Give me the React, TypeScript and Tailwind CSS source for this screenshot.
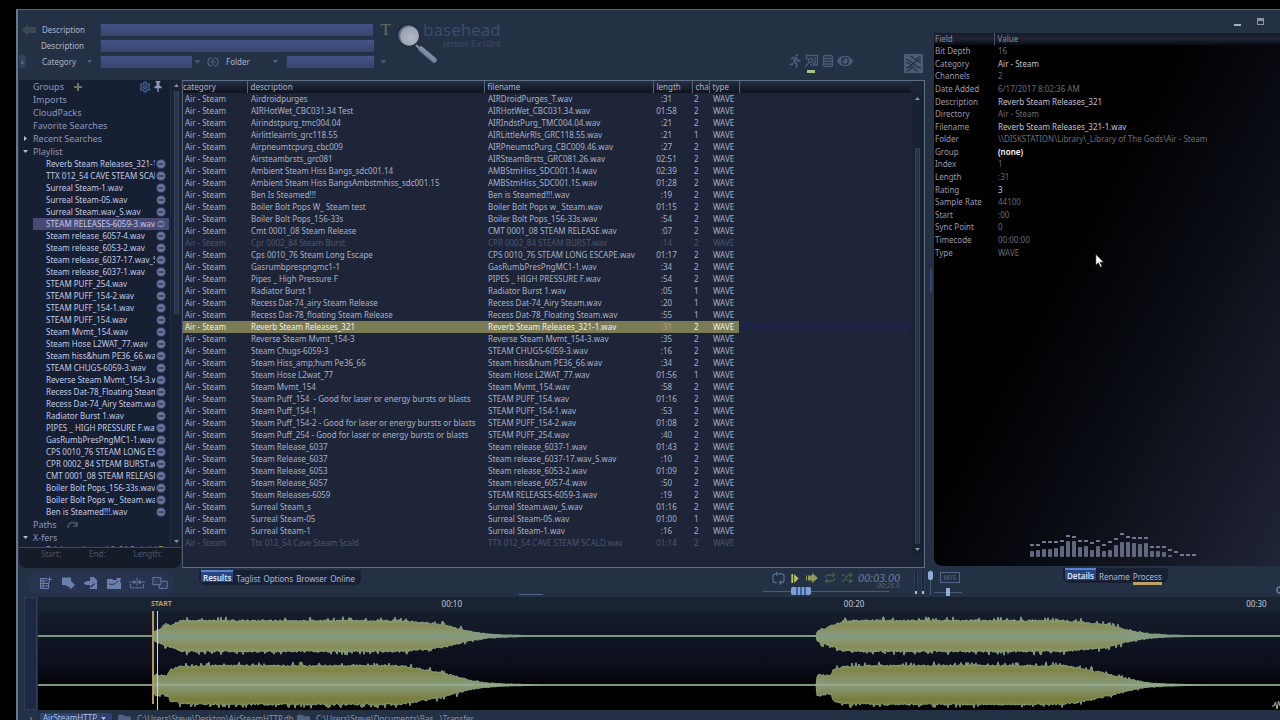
import React from 'react';
import { FaRunning, FaEye, FaFolder } from 'react-icons/fa';
import { LuRepeat, LuShuffle, LuSettings } from 'react-icons/lu';

type Row = [string, string, string, string, boolean?];

const ROWS: Row[] = [
  ['Airdroidpurges', 'AIRDroidPurges_T.wav', ':31', '2'],
  ['AIRHotWet_CBC031.34 Test', 'AIRHotWet_CBC031.34.wav', '01:58', '2'],
  ['Airindstpurg_tmc004.04', 'AIRIndstPurg_TMC004.04.wav', ':21', '2'],
  ['Airlittleairrls_grc118.55', 'AIRLittleAirRls_GRC118.55.wav', ':21', '1'],
  ['Airpneumtcpurg_cbc009', 'AIRPneumtcPurg_CBC009.46.wav', ':27', '2'],
  ['Airsteambrsts_grc081', 'AIRSteamBrsts_GRC081.26.wav', '02:51', '2'],
  ['Ambient Steam Hiss Bangs_sdc001.14', 'AMBStmHiss_SDC001.14.wav', '02:39', '2'],
  ['Ambient Steam Hiss BangsAmbstmhiss_sdc001.15', 'AMBStmHiss_SDC001.15.wav', '01:28', '2'],
  ['Ben Is Steamed!!!', 'Ben is Steamed!!!.wav', ':19', '2'],
  ['Boiler Bolt Pops W_ Steam test', 'Boiler Bolt Pops w_ Steam.wav', '01:15', '2'],
  ['Boiler Bolt Pops_156-33s', 'Boiler Bolt Pops_156-33s.wav', ':54', '2'],
  ['Cmt 0001_08 Steam Release', 'CMT 0001_08 STEAM RELEASE.wav', ':07', '2'],
  ['Cpr 0002_84 Steam Burst', 'CPR 0002_84 STEAM BURST.wav', ':14', '2', true],
  ['Cps 0010_76 Steam Long Escape', 'CPS 0010_76 STEAM LONG ESCAPE.wav', '01:17', '2'],
  ['Gasrumbprespngmc1-1', 'GasRumbPresPngMC1-1.wav', ':34', '2'],
  ['Pipes _ High Pressure F', 'PIPES _ HIGH PRESSURE F.wav', ':54', '2'],
  ['Radiator Burst 1', 'Radiator Burst 1.wav', ':05', '1'],
  ['Recess Dat-74_airy Steam Release', 'Recess Dat-74_Airy Steam.wav', ':20', '1'],
  ['Recess Dat-78_floating Steam Release', 'Recess Dat-78_Floating Steam.wav', ':55', '1'],
  ['Reverb Steam Releases_321', 'Reverb Steam Releases_321-1.wav', ':31', '2'],
  ['Reverse Steam Mvmt_154-3', 'Reverse Steam Mvmt_154-3.wav', ':35', '2'],
  ['Steam Chugs-6059-3', 'STEAM CHUGS-6059-3.wav', ':16', '2'],
  ['Steam Hiss_amp;hum Pe36_66', 'Steam hiss&hum PE36_66.wav', ':34', '2'],
  ['Steam Hose L2wat_77', 'Steam Hose L2WAT_77.wav', '01:56', '1'],
  ['Steam Mvmt_154', 'Steam Mvmt_154.wav', ':58', '2'],
  ['Steam Puff_154  - Good for laser or energy bursts or blasts', 'STEAM PUFF_154.wav', '01:16', '2'],
  ['Steam Puff_154-1', 'STEAM PUFF_154-1.wav', ':53', '2'],
  ['Steam Puff_154-2 - Good for laser or energy bursts or blasts', 'STEAM PUFF_154-2.wav', '01:08', '2'],
  ['Steam Puff_254 - Good for laser or energy bursts or blasts', 'STEAM PUFF_254.wav', ':40', '2'],
  ['Steam Release_6037', 'Steam release_6037-1.wav', '01:43', '2'],
  ['Steam Release_6037', 'Steam release_6037-17.wav_S.wav', ':10', '2'],
  ['Steam Release_6053', 'Steam release_6053-2.wav', '01:09', '2'],
  ['Steam Release_6057', 'Steam release_6057-4.wav', ':50', '2'],
  ['Steam Releases-6059', 'STEAM RELEASES-6059-3.wav', ':19', '2'],
  ['Surreal Steam_s', 'Surreal Steam.wav_S.wav', '01:16', '2'],
  ['Surreal Steam-05', 'Surreal Steam-05.wav', '01:00', '1'],
  ['Surreal Steam-1', 'Surreal Steam-1.wav', ':16', '2'],
  ['Ttx 012_54 Cave Steam Scald', 'TTX 012_54 CAVE STEAM SCALD.wav', '01:14', '2', true],
];
const SELECTED = 19;

const PLAYLIST = [
  'Reverb Steam Releases_321-1.wav', 'TTX 012_54 CAVE STEAM SCALD.wav', 'Surreal Steam-1.wav',
  'Surreal Steam-05.wav', 'Surreal Steam.wav_S.wav', 'STEAM RELEASES-6059-3.wav',
  'Steam release_6057-4.wav', 'Steam release_6053-2.wav', 'Steam release_6037-17.wav_S.wav',
  'Steam release_6037-1.wav', 'STEAM PUFF_254.wav', 'STEAM PUFF_154-2.wav', 'STEAM PUFF_154-1.wav',
  'STEAM PUFF_154.wav', 'Steam Mvmt_154.wav', 'Steam Hose L2WAT_77.wav', 'Steam hiss&hum PE36_66.wav',
  'STEAM CHUGS-6059-3.wav', 'Reverse Steam Mvmt_154-3.wav', 'Recess Dat-78_Floating Steam.wav',
  'Recess Dat-74_Airy Steam.wav', 'Radiator Burst 1.wav', 'PIPES _ HIGH PRESSURE F.wav',
  'GasRumbPresPngMC1-1.wav', 'CPS 0010_76 STEAM LONG ESCAPE.wav', 'CPR 0002_84 STEAM BURST.wav',
  'CMT 0001_08 STEAM RELEASE.wav', 'Boiler Bolt Pops_156-33s.wav', 'Boiler Bolt Pops w_ Steam.wav',
  'Ben is Steamed!!!.wav',
];

const DETAILS: [string, string, string][] = [
  ['Bit Depth', '16', 'text-[#6c6c74]'],
  ['Category', 'Air - Steam', 'text-[#c4c4d2]'],
  ['Channels', '2', 'text-[#6c6c74]'],
  ['Date Added', '6/17/2017 8:02:36 AM', 'text-[#6c6c74]'],
  ['Description', 'Reverb Steam Releases_321', 'text-[#c4c4d2]'],
  ['Directory', 'Air - Steam', 'text-[#6c6c74]'],
  ['Filename', 'Reverb Steam Releases_321-1.wav', 'text-[#c4c4d2]'],
  ['Folder', '\\\\DISKSTATION\\Library\\_Library of The Gods\\Air - Steam', 'text-[#6c6c74]'],
  ['Group', '(none)', 'text-white font-semibold'],
  ['Index', '1', 'text-[#6c6c74]'],
  ['Length', ':31', 'text-[#6c6c74]'],
  ['Rating', '3', 'text-[#c4c4d2]'],
  ['Sample Rate', '44100', 'text-[#6c6c74]'],
  ['Start', ':00', 'text-[#6c6c74]'],
  ['Sync Point', '0', 'text-[#6c6c74]'],
  ['Timecode', '00:00:00', 'text-[#6c6c74]'],
  ['Type', 'WAVE', 'text-[#6c6c74]'],
];

/* ---------- waveform ---------- */

const WAVE_W = 1242;
const PX_PER_SEC = 40.23;
const ORIGIN = 11.5;

function noise(n: number) {
  const s = Math.sin(n * 127.1 + 11.7) * 43758.5453;
  return s - Math.floor(s);
}

function level(points: [number, number][], d: number) {
  if (d < 0) return 0;
  for (let i = 1; i < points.length; i++) {
    const [x0, y0] = points[i - 1];
    const [x1, y1] = points[i];
    if (d <= x1) return y0 + ((y1 - y0) * (d - x0)) / (x1 - x0);
  }
  return 0;
}

const CH1: [number, number][] = [[0, 4], [3, 6], [10, 8], [20, 12], [27, 15], [60, 15], [245, 15], [268, 13], [288, 11], [305, 7], [318, 4], [332, 2], [350, 1], [390, 0]];
const CH2: [number, number][] = [[0, 8], [3, 11], [5, 9], [14, 9], [16, 15], [27, 18], [60, 19], [245, 19], [265, 16], [285, 12], [302, 8], [318, 4], [332, 2], [350, 1], [390, 0]];

function wavePath(points: [number, number][], mid: number, seed: number) {
  const top: string[] = [];
  const bottom: string[] = [];
  for (let x = 0; x <= WAVE_W; x++) {
    const d = x >= 779 ? x - 779 : x - 116;
    const a = level(points, d);
    const spread = a > 6 ? 1 : a / 8;
    const up = a + (noise(x + seed) - 0.3) * 2 * spread + (noise(x * 3 + seed) > 0.9 ? 3 * spread : 0);
    const down = a + (noise(x + seed + 977) - 0.3) * 2 * spread + (noise(x * 5 + seed) > 0.9 ? 3 * spread : 0);
    top.push(`${x},${(mid - Math.max(up, 0)).toFixed(1)}`);
    bottom.unshift(`${x},${(mid + Math.max(down, 0)).toFixed(1)}`);
  }
  return `M${top.join('L')}L${bottom.join('L')}Z`;
}
const WAVE1 = wavePath(CH1, 39, 5);
const WAVE2 = wavePath(CH2, 88, 431);

function Waveform() {
  return (
    <svg viewBox="0 0 1242 113" preserveAspectRatio="none" className="block h-full w-full" aria-hidden="true">
      <defs>
        <linearGradient id="w1" x1="0" y1="21" x2="0" y2="57" gradientUnits="userSpaceOnUse">
          <stop offset="0" stopColor="#879a6c" /><stop offset="0.2" stopColor="#868c58" />
          <stop offset="0.5" stopColor="#8a9c7e" /><stop offset="0.8" stopColor="#868c58" /><stop offset="1" stopColor="#879a6c" />
        </linearGradient>
        <linearGradient id="w2" x1="0" y1="67" x2="0" y2="109" gradientUnits="userSpaceOnUse">
          <stop offset="0" stopColor="#828f52" /><stop offset="0.15" stopColor="#808547" />
          <stop offset="0.5" stopColor="#8a9c7e" /><stop offset="0.85" stopColor="#787c3a" /><stop offset="1" stopColor="#7a8444" />
        </linearGradient>
      </defs>
      <path d={WAVE1} fill="url(#w1)" stroke="#93b08e" strokeWidth="0.8" />
      <path d={WAVE2} fill="url(#w2)" stroke="#93b08e" strokeWidth="0.8" />
      <rect x="0" y="38" width="1242" height="2" fill="#7d9a86" />
      <rect x="0" y="87.500" width="1242" height="1" fill="#9bb896" />
      <rect x="114" y="14" width="2" height="93" fill="#b8935c" />
      <rect x="119" y="14" width="1" height="99" fill="#d6d6a8" />
    </svg>
  );
}

function Ruler() {
  const at = (t: number) => ({ left: `${((ORIGIN + PX_PER_SEC * t) / WAVE_W) * 100}%` });
  return (
    <div className="absolute inset-x-0 top-0 h-[14px] text-[8px] leading-[14px] text-[#c3c9da]">
      <span className="absolute -translate-x-1/2 text-[7px] font-bold text-[#b99c66]" style={at(2.78)}>START</span>
      {[10, 20, 30].map((t) => (
        <span key={t} className="absolute -translate-x-1/2" style={at(t)}>00:{t}</span>
      ))}
    </div>
  );
}

/* ---------- small icons ---------- */

function Caret({ className = '' }: { className?: string }) {
  return <svg viewBox="0 0 8 5" className={`shrink-0 ${className}`} aria-hidden="true"><path d="M0 0h8L4 5z" fill="currentColor" /></svg>;
}

function MinusDot() {
  return (
    <button aria-label="Remove" className="shrink-0">
      <svg viewBox="0 0 10 10" className="size-[10px]"><circle cx="5" cy="5" r="4.800" fill="#414b70" /><circle cx="5" cy="5" r="3.800" fill="#6a759e" /><path d="M2.500 5h5" stroke="#232b46" strokeWidth="1.200" /></svg>
    </button>
  );
}

function Magnifier() {
  return (
    <svg viewBox="0 0 46 44" className="h-11 w-[46px] shrink-0" aria-hidden="true">
      <defs>
        <radialGradient id="lens" cx="0.6" cy="0.6" r="0.7"><stop offset="0" stopColor="#b4b9c6" /><stop offset="1" stopColor="#969dac" /></radialGradient>
        <linearGradient id="handle" x1="0" y1="1" x2="1" y2="0"><stop offset="0" stopColor="#3a4c66" /><stop offset="0.5" stopColor="#7a8da6" /><stop offset="1" stopColor="#566a86" /></linearGradient>
      </defs>
      <path d="M21 25l5 5" stroke="#8793a6" strokeWidth="2" />
      <path d="M26 29l13 11" stroke="url(#handle)" strokeWidth="5.500" strokeLinecap="round" />
      <path d="M26 27.500l13 11" stroke="#8495ac" strokeWidth="1.500" strokeLinecap="round" />
      <circle cx="13" cy="15" r="11.200" fill="#1a2436" />
      <circle cx="13.500" cy="15.500" r="10.400" fill="#59677e" />
      <circle cx="14.500" cy="16" r="9.400" fill="url(#lens)" />
    </svg>
  );
}

function Wordmark() {
  return (
    <div className="text-[#3c4c6b]">
      <div className="text-[17px] leading-5">basehead</div>
      <div className="pl-5 text-[8px] italic leading-2">version 5.x Ultra</div>
    </div>
  );
}

function Scroll({ className, track, thumb }: { className: string; track: string; thumb: string }) {
  return (
    <div className={`flex flex-col items-center text-[#8a95ab] ${className}`} aria-hidden="true">
      <Caret className="my-1 h-[3px] w-[5px] rotate-180" />
      <div className={`flex min-h-0 w-full flex-1 flex-col items-center ${track}`}><div className={`w-[5px] border-x border-[#35435a] bg-[#29344a] ${thumb}`} /></div>
      <Caret className="my-1 h-[3px] w-[5px]" />
    </div>
  );
}

const FIELD = 'h-[13px] min-w-0 border-0 border-t border-l border-[#26345a] bg-gradient-to-b from-[#445486] to-[#37466f] px-1 text-[8px] text-[#c5cce0] outline-none';

function SearchForm() {
  return (
    <form className="flex w-[372px] shrink-0 flex-col gap-[3px] pt-[13px] text-[8px] leading-3 text-[#aab6ce]">
      <div className="flex items-center">
        <button type="button" aria-label="Back" className="ml-[3px] w-5">
          <svg viewBox="0 0 14 12" className="h-3 w-[14px]"><path d="M0 6l6-6v3h8v6H6v3z" fill="#3c4a50" /></svg>
        </button>
        <label htmlFor="d1" className="w-[58px]">Description</label>
        <input id="d1" className={`${FIELD} w-[274px]`} />
        <button type="button" className="w-[18px] pl-1 text-right font-['Liberation_Serif',serif] text-[17px] leading-3 text-[#5c6e60]">T</button>
      </div>
      <div className="flex items-center">
        <label htmlFor="d2" className="ml-[22px] w-[59px]">Description</label>
        <input id="d2" className={`${FIELD} w-[274px]`} />
      </div>
      <div className="flex items-center">
        <button type="button" aria-label="Collapse" className="h-[13px] w-[7px] rounded-r bg-[#33415a] text-[9px] leading-[10px] text-[#8996ae]">‹</button>
        <div className="relative ml-4 flex w-[58px] items-center">
          <select aria-label="First field" className="w-14 appearance-none bg-transparent outline-none"><option>Category</option></select>
          <Caret className="pointer-events-none absolute right-2 h-[3px] w-[5px] text-[#56668a]" />
        </div>
        <input aria-label="Category text" className={`${FIELD} w-[92px]`} />
        <Caret className="ml-[2px] h-1 w-[7px] text-[#44546c]" />
        <svg viewBox="0 0 12 10" className="ml-[6px] h-[10px] w-3 text-[#596a86]" fill="none" stroke="currentColor" aria-hidden="true"><path d="M5 1H4a3 3 0 00-3 3v2a3 3 0 003 3h1M7 1h1a3 3 0 013 3v2a3 3 0 01-3 3H7M3.500 5h5M5 3h2M5 7h2" /></svg>
        <div className="relative ml-[7px] flex w-[60px] items-center">
          <select aria-label="Second field" className="w-14 appearance-none bg-transparent outline-none"><option>Folder</option></select>
          <Caret className="pointer-events-none absolute right-2 h-[3px] w-[5px] text-[#56668a]" />
        </div>
        <input aria-label="Folder text" className={`${FIELD} w-[88px]`} />
        <Caret className="ml-[6px] h-1 w-[7px] text-[#44546c]" />
      </div>
    </form>
  );
}

function SearchHeader() {
  return (
    <header className="flex h-[70px] shrink-0">
      <SearchForm />
      <div className="flex shrink-0 pl-1 pt-[10px]">
        <Magnifier />
      </div>
      <div className="-ml-[18px] pt-[10px]"><Wordmark /></div>
      <div className="ml-auto flex items-start gap-[2px] pt-[44px] text-[#4a5b79]">
        <button aria-label="Run"><FaRunning className="size-[14px]" /></button>
        <button aria-label="Card view" className="flex flex-col items-center gap-0.5">
          <svg viewBox="0 0 14 14" className="size-[14px]" fill="none" stroke="currentColor" strokeWidth="1.300"><path d="M2.500 6V1.500h11v9.500H6M1 13l3.500-4" /><circle cx="6.500" cy="6.500" r="2" /><path d="M9.500 4.500h2.500M10 7h2M9 9h3" /></svg>
          <span className="h-[3px] w-2 bg-[#a9c58e]" />
        </button>
        <button aria-label="Database" className="ml-0.5">
          <svg viewBox="0 0 12 14" className="h-[14px] w-3" fill="none" stroke="currentColor" strokeWidth="1.300"><rect x="1.500" y="1.500" width="9" height="3" rx="1.500" /><path d="M1.500 4v6.500c0 1 1 2 2 2h5c1 0 2-1 2-2V4M1.500 6c0 1 1 1.300 2 1.300h5c1 0 2-.3 2-1.300M1.500 8.700c0 1 1 1.300 2 1.300h5c1 0 2-.3 2-1.300" /></svg>
        </button>
        <button aria-label="Preview" className="ml-px"><FaEye className="-mt-px size-4" /></button>
      </div>
      <button aria-label="Randomize" className="ml-[51px] mr-[2px] mt-[44px] size-[19px] shrink-0">
        <svg viewBox="0 0 18 18" className="size-[19px]"><rect width="18" height="18" fill="#4d5c75" /><path d="M2 5c6 0 7 8 14 8M2 8c6 0 6 8 11 8M2 13C8 13 9 5 16 5M6 2c4 1 5 6 10 6M2 16c4 0 5-3 6-4M11 6c1-2 3-3 5-3" fill="none" stroke="#243044" strokeWidth="1.200" /></svg>
      </button>
    </header>
  );
}

/* ---------- sidebar ---------- */

function TreeHead({ label, state, children }: { label: string; state?: 'open' | 'closed'; children?: React.ReactNode }) {
  return (
    <div className="flex h-[13px] shrink-0 items-center text-[9px] leading-3 text-[#8b97bb]">
      <span className="flex w-[14px] pl-1">
        {state && <Caret className={`h-[3px] w-[5px] text-[#b9c0c4] ${state === 'closed' ? '-rotate-90' : ''}`} />}
      </span>
      <span>{label}</span>
      {children}
    </div>
  );
}

function Sidebar() {
  return (
    <aside className="flex w-[162px] shrink-0 flex-col">
      <div className="flex min-h-0 flex-1 border-b border-[#3d4a5e] bg-[#171f33]">
        <nav className="min-w-0 flex-1 overflow-hidden">
          <TreeHead label="Groups">
            <button aria-label="Add group" className="ml-[10px]"><svg viewBox="0 0 8 8" className="size-2"><path d="M3 0h2v3h3v2H5v3H3V5H0V3h3z" fill="#6f7565" /></svg></button>
            <button aria-label="Group settings" className="ml-auto"><LuSettings className="size-[12px] text-[#415a8c]" strokeWidth={3} /></button>
            <button aria-label="Pin" className="ml-[3px] mr-[8px]"><svg viewBox="0 0 8 12" className="h-[11px] w-2"><path d="M1.500 0h5v1.500h-1V5L8 6.500V8H4.700v4H3.300V8H0V6.500L2.500 5V1.500h-1z" fill="#8d9cbd" /></svg></button>
          </TreeHead>
          <TreeHead label="Imports" />
          <TreeHead label="CloudPacks" />
          <TreeHead label="Favorite Searches" />
          <TreeHead label="Recent Searches" state="closed" />
          <TreeHead label="Playlist" state="open" />
          <ul>
            {PLAYLIST.map((name, i) => (
              <li key={name} className={`ml-[14px] mr-px flex h-3 items-center gap-px pl-[13px] pr-[3px] text-[8px] leading-3 text-[#c2cbe6] ${i === 5 ? 'bg-[#4a4976]' : ''}`}>
                <span className="min-w-0 flex-1 overflow-hidden whitespace-nowrap">{name}</span>
                <span className="flex"><MinusDot /></span>
              </li>
            ))}
          </ul>
          <TreeHead label="Paths">
            <svg viewBox="0 0 12 8" className="ml-[10px] h-2 w-3" fill="none" stroke="#4a566c" strokeWidth="1.500" aria-hidden="true"><path d="M1 7c0-7 8-7 9-2M10 1v4H6" /></svg>
          </TreeHead>
          <TreeHead label="X-fers" state="open" />
          <div className="ml-[27px] flex h-[5px] items-start overflow-hidden pr-[5px] text-[8px] leading-3 text-[#8b97bb]">
            <span className="min-w-0 flex-1 overflow-hidden whitespace-nowrap">Bricks and metal 0_04 Switchbox</span>
            <span className="mt-0.5 h-2 w-2 rounded-full bg-[#8d8a55]" />
          </div>
        </nav>
        <Scroll className="w-[11px] border-l border-[#232e45] bg-[#1a2236]" track="" thumb="h-1/2" />
      </div>
      <div className="flex h-5 shrink-0 gap-[28px] rounded-b-lg bg-[#161b28] pl-[22px] text-[8px] leading-[11px] text-[#4b566b]">
        <span>Start:</span><span>End:</span><span>Length:</span>
      </div>
    </aside>
  );
}

/* ---------- results ---------- */

const TH = 'h-3 border-l border-[#5a667c] p-0 pl-[3px] text-left font-normal text-[#aab3c6]';

function Results() {
  return (
    <section className="ml-px flex min-w-0 flex-1 border border-[#5f6f86] border-l-[#4d5c74] bg-[#1e2539]">
      <div className="min-w-0 flex-1 overflow-hidden">
        <table className="w-full table-fixed border-collapse whitespace-nowrap text-[8px] leading-3 text-[#a8b1c8]">
          <colgroup>
            <col className="w-16" /><col className="w-[237px]" /><col className="w-[169px]" /><col className="w-[39px]" />
            <col className="w-[17px]" /><col className="w-[30px]" /><col />
          </colgroup>
          <thead>
            <tr className="bg-gradient-to-b from-[#253046] to-[#0e131e]">
              <th className="h-3 p-0 text-left font-normal text-[#aab3c6]">category</th>
              <th className={TH}>description</th>
              <th className={TH}>filename</th>
              <th className={TH}>length</th>
              <th className={TH}>cha</th>
              <th className={TH}>type</th>
              <th className={TH} />
            </tr>
          </thead>
          <tbody>
            {ROWS.map(([desc, file, len, ch, faint], i) => {
              const on = i === SELECTED;
              const cell = on ? 'h-3 bg-[#7b7b55] p-0 text-[#f2f2e4]' : 'h-3 p-0';
              return (
                <tr key={i} className={faint ? 'text-[#4c5670]' : ''} aria-selected={on}>
                  <td className={`${cell} pl-0.5`}>Air - Steam</td>
                  <td className={`${cell} whitespace-pre pl-1`}>{desc}</td>
                  <td className={`${cell} pl-1`}>{file}</td>
                  <td className={on ? 'h-3 bg-[#7b7b55] p-0 pr-3 text-center text-[#a9a98c]' : 'h-3 p-0 pr-3 text-center'}>{len}</td>
                  <td className={`${cell} pl-0.5`}>{ch}</td>
                  <td className={`${cell} pl-1`}>WAVE</td>
                  <td className={on ? 'h-3 bg-[linear-gradient(#1e2539_3px,#1a2246_3px_9px,#1e2539_9px)] p-0' : 'h-3 p-0'} />
                </tr>
              );
            })}
          </tbody>
        </table>
      </div>
      <Scroll className="mb-3 mt-3 w-[13px] bg-[#1a2133]" track="pt-11" thumb="flex-1" />
    </section>
  );
}

/* ---------- details ---------- */

const BARS = [[6, 11], [7, 11], [8, 14], [8, 14], [9, 14], [11, 15], [16, 20], [16, 19], [10, 15], [11, 15], [7, 13], [11, 15], [6, 11], [7, 14], [12, 17], [15, 22], [15, 19], [14, 18], [13, 18], [14, 18], [6, 9], [6, 9], [5, 9], [2, 6], [0, 4], [0, 1], [0, 1], [0, 1]];

function Spectrum() {
  return (
    <svg viewBox="0 0 168 26" className="h-[26px] w-[168px]" fill="#626780" aria-hidden="true">
      {BARS.map(([h, peak], i) => (
        <g key={i}>
          {h > 0 && <rect x={i * 6} y={25 - h} width="4" height={h} rx="1" />}
          <rect x={i * 6} y={23 - peak} width="4" height="2" rx="0.5" fill="#767b93" />
        </g>
      ))}
    </svg>
  );
}

function Details() {
  return (
    <section className="mb-[2px] mt-[2px] flex min-h-0 flex-1 flex-col rounded-bl-lg bg-[linear-gradient(118deg,#000_38%,#090b13_60%,#12151f_75%,#1f2437_100%)]">
      <table className="h-[226px] w-full table-fixed border-collapse whitespace-nowrap text-[8px] leading-3 text-[#9b9aae]">
        <colgroup><col className="w-[60px]" /><col /></colgroup>
        <thead>
          <tr className="bg-gradient-to-b from-[#171b2a] via-[#1f2434] to-[#090b12]">
            <th className="h-3 p-0 pl-px text-left font-normal text-[#8587a0]">Field</th>
            <th className="h-3 border-l border-[#4a5066] p-0 pl-[3px] text-left font-normal text-[#8587a0]">Value</th>
          </tr>
        </thead>
        <tbody>
          {DETAILS.map(([f, v, tone]) => (
            <tr key={f}><td className="p-0 pl-px">{f}</td><td className={`p-0 pl-1 ${tone}`}>{v}</td></tr>
          ))}
        </tbody>
      </table>
      <div className="mb-2 ml-24 mt-auto"><Spectrum /></div>
    </section>
  );
}

/* ---------- toolbar ---------- */

function TabBar({ tabs, marked }: { tabs: string[]; marked?: string }) {
  return (
    <div role="tablist" className="flex h-[15px] shrink-0 items-stretch gap-[3px] rounded-b-md bg-[#182035] pl-0.5 pr-1.5 text-[8px] leading-3 text-[#aeb8d0]">
      {tabs.map((t, i) => (
        <button key={t} role="tab" aria-selected={i === 0} className={i === 0 ? 'h-3 border-t-2 border-[#5a83cf] bg-[#2a4480] px-0.5 font-semibold leading-[11px] text-[#dbe4f8]' : t === marked ? '-mb-[2px] border-b-[3px] border-[#c2a169] pt-[3px]' : 'pt-[3px]'}>{t}</button>
      ))}
    </div>
  );
}

function ToolIcons() {
  const cls = 'h-[14px] w-4';
  return (
    <div className="ml-[11px] mt-[5px] flex h-5 w-[144px] shrink-0 items-center gap-[7px] rounded bg-[#27334f] pl-2 text-[#6a7fae]">
      <button aria-label="Add list"><svg viewBox="0 0 16 14" className={cls} fill="none" stroke="currentColor"><path d="M3 2.500h7M3.500 2v10.500h8V6M4 5h6M4 7.500h7M4 10h7M6 3v9M12.500 1v5M10 3.500h5" /></svg></button>
      <button aria-label="Copy to"><svg viewBox="0 0 16 14" className={cls} fill="currentColor"><path d="M2 1.500h9V5l4 4-4 4-3-3-1 .5L5 9H2z" /></svg></button>
      <button aria-label="Import"><svg viewBox="0 0 16 14" className={cls} fill="currentColor"><path d="M7 1h4l3 3v9H7v-2h1v1l4-4-4-4v1H7zM1 8c0-2 2-3 4-3h2V3l4 4-4 4V9c-3 0-4 0-6-1z" /></svg></button>
      <button aria-label="Open folder"><svg viewBox="0 0 16 14" className={cls} fill="currentColor"><path d="M1 3h6v1h4l-1-2h5l-1 4 1 1v6H1z" /><path d="M3 8c4 1 7 0 9-3" fill="none" stroke="#27334f" /></svg></button>
      <button aria-label="Fit region"><svg viewBox="0 0 18 14" className={cls} fill="currentColor" stroke="currentColor"><path d="M1.500 8v4.500h15V8M0 6h5M13 6h5M9 1v9" fill="none" /><path d="M5 3l3 3-3 3zM13 3l-3 3 3 3z" stroke="none" /></svg></button>
      <button aria-label="Randomize"><svg viewBox="0 0 18 14" className={cls} fill="none" stroke="currentColor" strokeWidth="1.100"><path d="M1 1h9v8H1zM10 5h7v8H8V9M3 3l1 1M7 3l1 1M5 5v1M3 7h1M7 7h1M12 8h1M14 10h1M11 11h1" /></svg></button>
    </div>
  );
}

const RANGE = 'appearance-none bg-transparent [&::-webkit-slider-runnable-track]:bg-[#4a5a75] [&::-webkit-slider-runnable-track]:h-px [&::-webkit-slider-thumb]:appearance-none';

function Transport() {
  return (
    <div className="ml-auto flex w-[142px] shrink-0 flex-col pt-[3px]">
      <div className="flex h-[14px] items-center gap-[5px] pl-[9px] text-[#5c6f4c]">
        <button aria-label="Loop" className="text-[#566890]"><svg viewBox="0 0 14 14" className="size-[13px]" fill="none" stroke="currentColor" strokeWidth="1.400"><path d="M5 11.500H4a3 3 0 01-3-3V5a3 3 0 013-3h6a3 3 0 013 3v3.500a3 3 0 01-3 3H8M5 0v4M10 9.500L8 11.500l2 2" /></svg></button>
        <button aria-label="Play" className="text-[#b5c069]"><svg viewBox="0 0 10 12" className="h-[11px] w-[10px]" fill="currentColor"><path d="M1 1h2v10H1zM4 1l5 5-5 5z" /></svg></button>
        <button aria-label="Next" className="text-[#8d9a58]"><svg viewBox="0 0 14 12" className="h-3 w-[14px]" fill="currentColor"><path d="M1 3.500h1v5H1zM3 3.500h4V1l6 5-6 5V8.500H3z" /></svg></button>
        <button aria-label="Repeat"><LuRepeat className="size-3" /></button>
        <button aria-label="Shuffle"><LuShuffle className="size-3" /></button>
        <span className="text-[11px] italic leading-[14px] text-[#6b7b98]">00:03.00</span>
      </div>
      <div className="flex h-[13px] items-center">
        <input type="range" aria-label="Position" min={0} max={100} defaultValue={26} className={`${RANGE} h-2 w-[126px] [&::-webkit-slider-thumb]:-mt-1 [&::-webkit-slider-thumb]:h-2 [&::-webkit-slider-thumb]:w-5 [&::-webkit-slider-thumb]:rounded-xs [&::-webkit-slider-thumb]:bg-[linear-gradient(90deg,#7fa0d6_5px,#3f5f9a_5px_7px,#7fa0d6_7px_9px,#3f5f9a_9px_11px,#7fa0d6_11px_13px,#3f5f9a_13px_15px,#7fa0d6_15px)]`} />
        <span className="-ml-3 -mt-2.5 text-[7px] italic leading-2 text-[#56647e]">00:26.0</span>
      </div>
    </div>
  );
}

function Meters() {
  return (
    <div className="ml-[9px] flex h-full shrink-0 items-start gap-[3px] pt-0.5" aria-hidden="true">
      {[0, 1].map((i) => (
        <div key={i} className="flex h-6 w-1 flex-col justify-end border-x border-[#2f3d56] bg-[#1d2739]"><span className="h-[3px] bg-[#a9b6cf]" /></div>
      ))}
      <div className="relative flex h-[25px] w-[5px] justify-center"><span className="h-full w-px bg-[#4a5a75]" /><span className="absolute top-px h-[9px] w-[5px] rounded-xs bg-[#8fadd9]" /></div>
    </div>
  );
}

function Toolbar() {
  return (
    <div className="flex h-[29px] shrink-0">
      <div className="flex min-w-0 flex-1">
        <ToolIcons />
        <div className="ml-[26px] mt-0.5"><TabBar tabs={['Results', 'Taglist', 'Options', 'Browser', 'Online']} /></div>
        <span className="ml-[158px] mt-[26px] h-px w-6 bg-[#56668a]" />
        <Transport />
        <Meters />
      </div>
      <div className="flex w-[347px] shrink-0">
        <div className="ml-px flex w-[28px] flex-col items-center pt-1">
          <button className="ml-1 h-[11px] w-5 shrink-0 border border-[#54658c] text-[7px] leading-[9px] text-[#54658c]">M/S</button>
          <input type="range" aria-label="Pan" className={`${RANGE} mt-[5px] h-[9px] w-[28px] [&::-webkit-slider-thumb]:-mt-1 [&::-webkit-slider-thumb]:h-2 [&::-webkit-slider-thumb]:w-1 [&::-webkit-slider-thumb]:bg-[#8fadd9]`} />
        </div>
        <div className="ml-[101px]"><TabBar tabs={['Details', 'Rename', 'Process']} marked="Process" /></div>
        <svg viewBox="0 0 8 8" className="-mr-1 ml-auto mt-[18px] size-2" fill="none" stroke="#6a7ba0" strokeWidth="1.500" aria-hidden="true"><circle cx="4" cy="4" r="3" /></svg>
      </div>
    </div>
  );
}

export default function App() {
  return (
    <div className="relative h-screen overflow-hidden bg-black pl-4 pt-[9px] font-['Noto_Sans','Open_Sans',sans-serif] select-none">
      <div className="flex h-full flex-col border-l-2 border-t border-l-[#69758a] border-t-[#55657c] bg-[#243044]">
        <main className="flex min-h-0 flex-1 pl-px">
          <div className="flex min-w-0 flex-1 flex-col">
            <SearchHeader />
            <div className="flex min-h-0 flex-1"><Sidebar /><Results /></div>
          </div>
          <div className="flex w-[9px] shrink-0 flex-col justify-center"><span className="mb-4 ml-[5px] h-6 w-0.5 bg-[#36456a]" /></div>
          <div className="flex w-[346px] shrink-0 flex-col">
            <div className="flex h-[21px] shrink-0 items-start justify-end gap-4 pr-4 pt-2">
              <button aria-label="Minimize" className="flex h-2 w-[7px] items-end"><span className="h-0.5 w-full bg-[#a8b0c0]" /></button>
              <button aria-label="Restore" className="h-[7px] w-[7px] border border-t-[3px] border-[#8b94a8]" />
            </div>
            <Details />
          </div>
        </main>
        <Toolbar />
        <div className="flex h-[113px] shrink-0 pl-1.5">
          <div className="w-[13px] border border-[#2f3c5c] bg-[#1e2840]" />
          <div className="relative ml-px min-w-0 flex-1 bg-[linear-gradient(#1a2332_0_14px,#161e2c_15px,#0b0d1a_70px,#000_95px)]">
            <Waveform />
            <Ruler />
            <svg viewBox="0 0 8 10" className="absolute bottom-0 right-0 h-[10px] w-2" fill="none" stroke="#b8b8a0" aria-hidden="true"><path d="M0 6h2l1.500-4L5 9l1.500-8L8 6" /></svg>
          </div>
        </div>
        <footer className="flex h-[10px] shrink-0 items-start overflow-hidden pl-2 text-[8px] leading-4 text-[#8793ad]">
          <button aria-label="Expand" className="w-[10px] text-[10px]">›</button>
          <button className="ml-1 mt-[3px] flex h-4 w-[72px] items-start gap-1 bg-[#2c4273] pl-[3px] leading-[10px] text-[#b4c0dc]">AirSteamHTTP <Caret className="mt-1 h-[3px] w-[5px]" /></button>
          <FaFolder className="ml-[6px] mt-[3px] size-[13px] text-[#4f6284]" />
          <span className="ml-[6px] mt-px w-[148px] whitespace-nowrap">C:\Users\Steve\Desktop\AirSteamHTTP.db</span>
          <FaFolder className="ml-3 mt-[3px] size-[13px] text-[#4f6284]" />
          <span className="ml-[6px] mt-px whitespace-nowrap">C:\Users\Steve\Documents\Bas...\Transfer</span>
        </footer>
      </div>
      <svg viewBox="0 0 12 18" className="pointer-events-none absolute left-[1095px] top-[253px] h-4 w-[10px]" aria-hidden="true"><path d="M1 1v13l3-3 2.500 5.500 2-1L6 10.500h4.500z" fill="#fff" stroke="#000" strokeWidth="0.600" /></svg>
    </div>
  );
}
